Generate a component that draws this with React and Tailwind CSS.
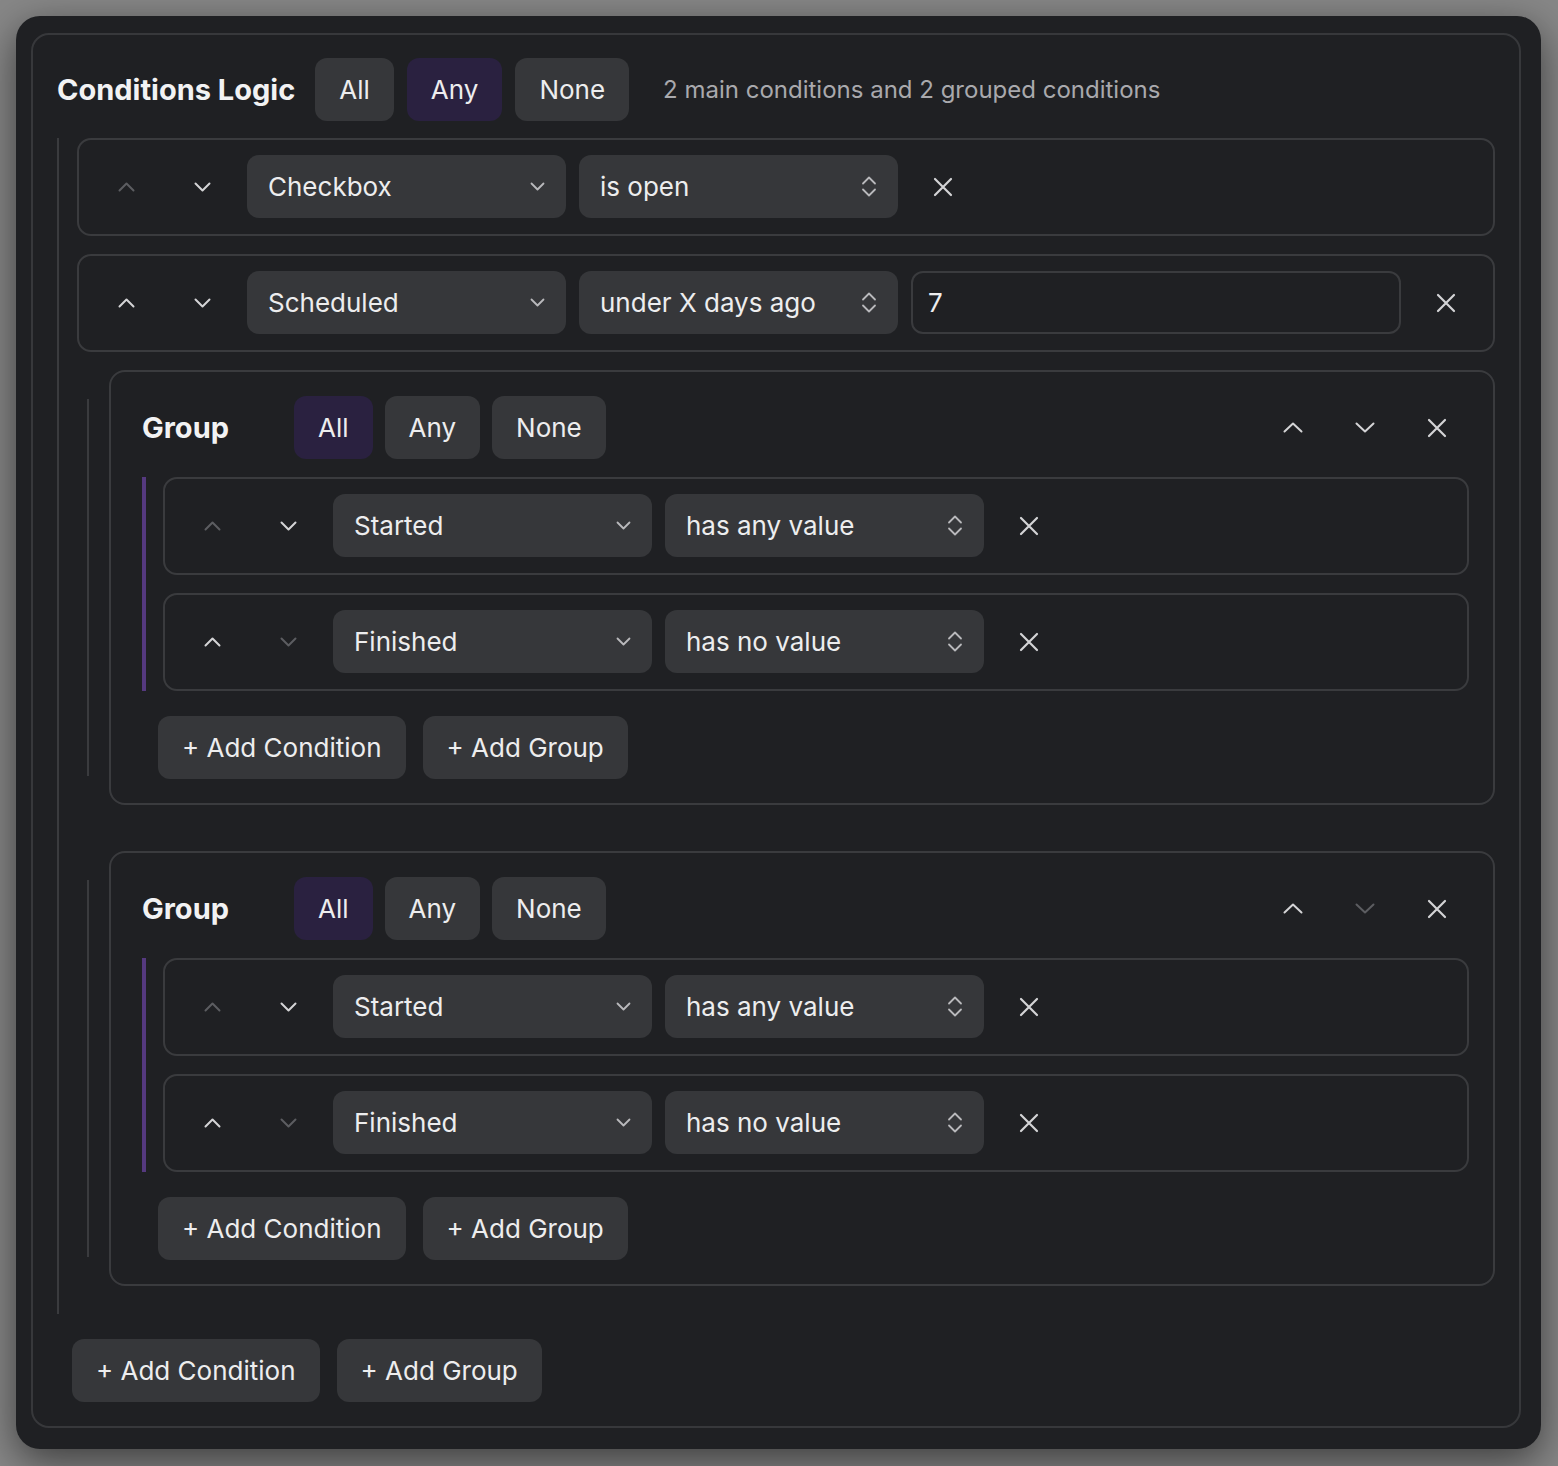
import React from 'react'

const Chevron = ({ up, dim, big }) => {
  const w = big ? 20 : 17
  const h = big ? 11 : 10
  return (
    <svg width={w} height={h} viewBox={`0 0 ${w} ${h}`} fill="none" className={dim ? 'text-[#5c5d61]' : 'text-[#d4d4d6]'}>
      <path
        d={up ? `M1.5 ${h - 1.5} L${w / 2} 1.5 L${w - 1.5} ${h - 1.5}` : `M1.5 1.5 L${w / 2} ${h - 1.5} L${w - 1.5} 1.5`}
        stroke="currentColor"
        strokeWidth="2"
        strokeLinecap="round"
        strokeLinejoin="round"
      />
    </svg>
  )
}

const Cross = () => (
  <svg width="20" height="20" viewBox="0 0 20 20" fill="none" className="text-[#d4d4d6]">
    <path d="M2 2 L18 18 M18 2 L2 18" stroke="currentColor" strokeWidth="2.2" strokeLinecap="round" />
  </svg>
)

const SmallDown = () => (
  <svg width="15" height="9" viewBox="0 0 15 9" fill="none" className="text-[#b9b9bc]">
    <path d="M1.5 1.5 L7.5 7.5 L13.5 1.5" stroke="currentColor" strokeWidth="1.8" strokeLinecap="round" strokeLinejoin="round" />
  </svg>
)

const UpDown = () => (
  <svg width="16" height="21" viewBox="0 0 16 21" fill="none" className="text-[#b9b9bc]">
    <path d="M2 7.5 L8 1.5 L14 7.5 M2 13.5 L8 19.5 L14 13.5" stroke="currentColor" strokeWidth="1.8" strokeLinecap="round" strokeLinejoin="round" />
  </svg>
)

function Toggle({ active, gap = 'gap-[13px]' }) {
  return (
    <div className={`flex ${gap}`}>
      {['All', 'Any', 'None'].map((l) => (
        <button
          key={l}
          className={`h-[63px] px-[24px] rounded-[12px] text-[26px] text-[#ededee] ${
            l === active ? 'bg-[#2a2140]' : 'bg-[#36373a]'
          }`}
        >
          {l}
        </button>
      ))}
    </div>
  )
}

function Row({ field, op, value, upDim, downDim }) {
  return (
    <div className="flex items-center gap-[13px] border-2 border-[#3a3b3e] rounded-[14px] pl-4 pr-[15px] pt-[15px] pb-[16px]">
      <button className="w-[63px] h-[63px] flex items-center justify-center">
        <Chevron up dim={upDim} />
      </button>
      <button className="w-[63px] h-[63px] flex items-center justify-center">
        <Chevron dim={downDim} />
      </button>
      <div className="w-[319px] h-[63px] rounded-[12px] bg-[#36373a] flex items-center justify-between pl-[21px] pr-[21px] text-[26px] text-[#ededee]">
        <span>{field}</span>
        <SmallDown />
      </div>
      <div className="w-[319px] h-[63px] rounded-[12px] bg-[#36373a] flex items-center justify-between pl-[21px] pr-[21px] text-[26px] text-[#ededee]">
        <span>{op}</span>
        <UpDown />
      </div>
      {value !== undefined && (
        <div className="flex-1 h-[63px] rounded-[12px] border-2 border-[#3a3b3e] flex items-center pl-[15px] text-[26px] text-[#ededee]">
          {value}
        </div>
      )}
      <button className="w-[64px] h-[63px] flex items-center justify-center">
        <Cross />
      </button>
    </div>
  )
}

function AddButtons({ className = '' }) {
  return (
    <div className={`flex gap-[17px] ${className}`}>
      <button className="h-[63px] px-[24px] rounded-[12px] bg-[#36373a] text-[26px] text-[#ededee]">+ Add Condition</button>
      <button className="h-[63px] px-[24px] rounded-[12px] bg-[#36373a] text-[26px] text-[#ededee]">+ Add Group</button>
    </div>
  )
}

function Group({ downDim }) {
  return (
    <div className="flex pl-[10px] gap-[20px] mb-[28px]">
      <div className="w-[2px] my-[29px] bg-[#3a3b3e]" />
      <div className="flex-1 border-2 border-[#3a3b3e] rounded-[16px] pl-[31px] pr-[24px] pt-[24px] pb-[24px]">
        <div className="flex items-center">
          <div className="w-[152px] text-[29px] font-bold text-[#f2f2f3]">Group</div>
          <Toggle active="All" gap="gap-[12px]" />
          <div className="ml-auto flex gap-2">
            <button className="w-[64px] h-[63px] flex items-center justify-center">
              <Chevron up big />
            </button>
            <button className="w-[64px] h-[63px] flex items-center justify-center">
              <Chevron big dim={downDim} />
            </button>
            <button className="w-[64px] h-[63px] flex items-center justify-center">
              <Cross />
            </button>
          </div>
        </div>
        <div className="flex gap-[17px] mt-[18px]">
          <div className="w-[4px] bg-[#55397f]" />
          <div className="flex-1 flex flex-col gap-[18px]">
            <Row field="Started" op="has any value" upDim />
            <Row field="Finished" op="has no value" downDim />
          </div>
        </div>
        <AddButtons className="mt-[25px] ml-[16px]" />
      </div>
    </div>
  )
}

export default function App() {
  return (
    <div className="w-[1558px] h-[1466px] bg-[#878787] p-4 font-[Inter,sans-serif]">
      <div className="w-[1525px] bg-[#1f2023] rounded-[24px] shadow-[0_12px_40px_rgba(0,0,0,0.55)] pl-[15px] pt-[17px] pr-[20px] pb-[21px]">
        <div className="border-2 border-[#37383b] rounded-[18px] px-[24px] pt-[23px] pb-[24px]">
          <div className="flex items-center">
            <h1 className="text-[29px] font-bold text-[#f2f2f3] mr-[20px]">Conditions Logic</h1>
            <Toggle active="Any" />
            <span className="ml-[34px] text-[24px] text-[#a9a9ad]">2 main conditions and 2 grouped conditions</span>
          </div>
          <div className="flex gap-[18px] mt-[17px]">
            <div className="w-[2px] bg-[#3a3b3e]" />
            <div className="flex-1 flex flex-col gap-[18px]">
              <Row field="Checkbox" op="is open" upDim />
              <Row field="Scheduled" op="under X days ago" value="7" />
              <Group />
              <Group downDim />
            </div>
          </div>
          <AddButtons className="mt-[25px] ml-[15px]" />
        </div>
      </div>
    </div>
  )
}
